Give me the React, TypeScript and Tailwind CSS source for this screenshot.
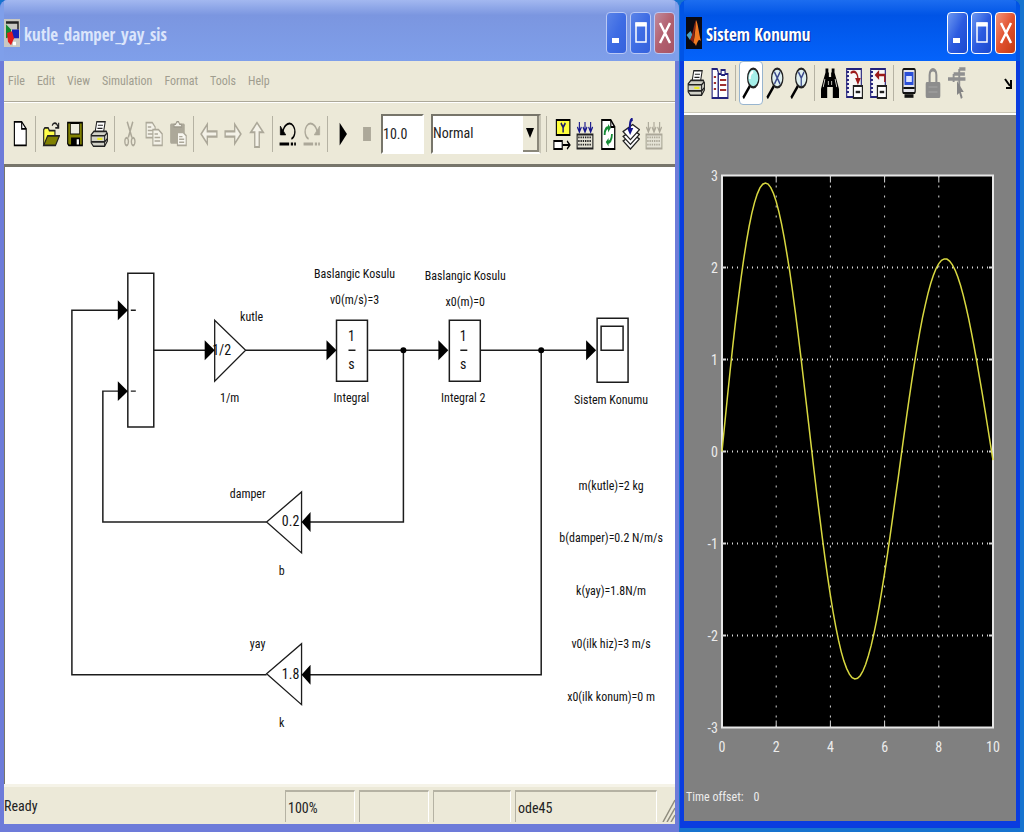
import type { ReactNode } from "react";
import clsx from "clsx";

/* ---------- icons, drawn on a 16 x 16 pixel grid ---------- */

function Glyph({ children, className }: { children: ReactNode; className?: string }) {
  return (
    <svg
      viewBox="0 0 16 16"
      preserveAspectRatio="none"
      className={clsx("shrink-0", className ?? "w-[18px] h-7")}
      fill="none"
      aria-hidden="true"
    >
      {children}
    </svg>
  );
}

const NewIcon = () => (
  <Glyph>
    <path d="M3 1h6.5L13.5 5v9.5H3z" fill="#fff" stroke="#000" />
    <path d="M9.5 1v4h4" stroke="#000" />
  </Glyph>
);

const OpenIcon = () => (
  <Glyph>
    <path d="M1.5 14.5v-9l1-1h3l1 1.5h5v3" fill="#ffff4a" stroke="#222" />
    <path d="M1.5 14.5l3.5-5.5h10.5l-3.5 5.5z" fill="#808000" stroke="#222" />
    <path d="M9 3.2c1-2 4-2 5.2.6M14.8 1.5v3h-3" stroke="#222" />
  </Glyph>
);

const SaveIcon = () => (
  <Glyph>
    <path d="M1.5 1.5h13v13h-12l-1-1z" fill="#808000" stroke="#000" />
    <path d="M4 2h8v6H4z" fill="#ecebe0" stroke="#000" strokeWidth=".6" />
    <path d="M4.5 10h8v4.5h-8z" fill="#000" />
    <path d="M9.5 11h2v3h-2z" fill="#fff" />
  </Glyph>
);

function PrintIcon({ className }: { className?: string }) {
  return (
    <Glyph className={className}>
      <path d="M4.5 7L6 1h7.5L12 7z" fill="#fff" stroke="#222" strokeWidth=".9" />
      <path d="M7 3h4.5M6.6 4.8h4.5" stroke="#222" strokeWidth=".7" />
      <path d="M1 8.5l2.5-2h11l1 1.5v4L13 15H3l-2-2z" fill="#d2d2c8" stroke="#222" strokeWidth=".9" />
      <path d="M1 9h12M13 9l2.3-1.7M1 12.5h12l2.3-1.7M13 9v6" stroke="#222" strokeWidth=".9" />
      <path d="M6.5 10.8h4.5" stroke="#e9e92a" strokeWidth="1.3" />
    </Glyph>
  );
}

const CutIcon = () => (
  <Glyph>
    <path d="M5.5 1L9.7 10M10.5 1L6.5 10" stroke="#aca899" strokeWidth="1.3" />
    <ellipse cx="5" cy="12.3" rx="1.6" ry="2.2" stroke="#aca899" strokeWidth="1.2" />
    <ellipse cx="10.8" cy="12.3" rx="1.6" ry="2.2" stroke="#aca899" strokeWidth="1.2" />
  </Glyph>
);

const CopyIcon = () => (
  <Glyph>
    <path d="M1 1.5h5.5L9 4v6H1z" fill="#f4f2e8" stroke="#aca899" />
    <path d="M2.5 4h3M2.5 6h5M2.5 8h5" stroke="#aca899" strokeWidth=".8" />
    <path d="M7 5.5h5L15.3 8v6.5H7z" fill="#f4f2e8" stroke="#aca899" />
    <path d="M8.5 8h3M8.5 10h5M8.5 12h5" stroke="#aca899" strokeWidth=".8" />
  </Glyph>
);

const PasteIcon = () => (
  <Glyph>
    <rect x="1" y="2" width="13" height="11.5" rx="1" fill="#aca899" />
    <path d="M4.5 4V2.5h1.3L7 1h1.5l1 1.5H11V4z" fill="#f4f2e8" stroke="#9d998b" strokeWidth=".8" />
    <path d="M7.5 7h5l2.8 2v5.5H7.5z" fill="#f8f7f0" stroke="#aca899" />
    <path d="M9 9.5h3M9 11h4.5M9 12.7h4.5" stroke="#aca899" strokeWidth=".8" />
  </Glyph>
);

const BackIcon = () => (
  <Glyph>
    <path d="M1 8l5.5-5.5v4H15v3H6.500v4z" fill="#f4f2e8" stroke="#aca899" strokeWidth="1.2" />
  </Glyph>
);

const ForwardIcon = () => (
  <Glyph>
    <path d="M15 8L9.500 2.500v4H1v3h8.500v4z" fill="#f4f2e8" stroke="#aca899" strokeWidth="1.2" />
  </Glyph>
);

const UpIcon = () => (
  <Glyph>
    <path d="M8 1.500L13.500 7H10v8.500H6V7H2.500z" fill="#f4f2e8" stroke="#aca899" strokeWidth="1.2" />
  </Glyph>
);

function TurnIcon({ redo }: { redo?: boolean }) {
  const ink = redo ? "#aca899" : "#000";
  return (
    <Glyph>
      <g transform={redo ? "matrix(-1 0 0 1 16 0)" : undefined} stroke={ink}>
        <path d="M3.5 6.5C5 2 10 .8 12.8 3.5c2.5 2.5 1.2 6.500-1.8 7.300" strokeWidth="1.1" />
        <path d="M1.2 3.5v5H6z" fill={ink} strokeWidth=".5" />
      </g>
      <path d="M.5 13.700h8.500M10.500 13.700h2M13.500 13.700h1.500" stroke={ink} strokeWidth="1.8" />
    </Glyph>
  );
}

const PlayIcon = () => (
  <Glyph>
    <path d="M5 1.5L11.5 8 5 14.5z" fill="#000" />
  </Glyph>
);

const StopIcon = () => (
  <Glyph>
    <path d="M4.5 4h7v8h-7z" fill="#aca899" />
  </Glyph>
);

const LibraryIcon = () => (
  <Glyph className="w-[18px] h-8">
    <path d="M3 1h12v7.5H3z" fill="#ffff3c" stroke="#000" />
    <path d="M7 2.5l2 2.2 2-2.2M9 4.5v2.7" stroke="#1b1b6e" strokeWidth="1.3" />
    <path d="M.8 11.5h7.4v4H.8z" fill="#fff" stroke="#000" />
    <path d="M8.5 13.5H15M12.5 11.5l2.5 2-2.5 2" stroke="#000" />
  </Glyph>
);

function BuildIcon({ off }: { off?: boolean }) {
  const arrows = off ? "#aca899" : "#16168c";
  const ink = off ? "#aca899" : "#222";
  return (
    <Glyph className="w-[18px] h-8">
      <path
        d="M3 2v4.500M8 2v4.500M13 2v4.500M1.200 4.500L3 7l1.800-2.500M6.200 4.500L8 7l1.800-2.500M11.200 4.500L13 7l1.800-2.500"
        stroke={arrows}
      />
      <path d="M1 8.200v7h14v-7z" fill="#e5e3d6" stroke={ink} />
      <path d="M2 9.700h12M2 11.500h12M2 13.300h12" stroke={ink} strokeWidth=".9" strokeDasharray="1.2 .8" />
    </Glyph>
  );
}

const RefreshIcon = () => (
  <Glyph className="w-[18px] h-8">
    <path d="M2.5 1h8L14 4.500v11H2.500z" fill="#fff" stroke="#000" strokeWidth="1.1" />
    <path d="M10.5 1v3.500H14" stroke="#000" />
    <path d="M5 8.500c0-3 2-4 4-3.500M11.500 8c0 3-2 4.500-4 4" stroke="#168c36" strokeWidth="1.6" />
    <path d="M8 3l2.500 2L8 7.200zM8.500 10L6 12l2.500 2.200z" fill="#168c36" />
  </Glyph>
);

const LayersIcon = () => (
  <Glyph className="w-[18px] h-8">
    <path d="M1 11.500L9.500 8l6 2.500-8 5z" fill="#fff" stroke="#222" strokeWidth=".8" />
    <path d="M1 9.200l8.500-3.500 6 2.500-8 5z" fill="#fff" stroke="#222" strokeWidth=".8" />
    <path d="M1 6.800l8.500-3.500 6 2.500-8 5z" fill="#fff" stroke="#222" strokeWidth=".8" />
    <path d="M9.500.5C7 1 7 3 7 5.500" stroke="#16168c" strokeWidth="1.8" />
    <path d="M4.500 5h5.500L7.200 8.500z" fill="#16168c" />
  </Glyph>
);

const ParametersIcon = () => (
  <Glyph className="w-[18px] h-8">
    <path d="M1 1h4.500l1 1.800V15.500H1z" fill="#fff" stroke="#22227c" />
    <path d="M6.500 3.500H9V1.500h3.500v2H15v12H6.500z" fill="#fff" stroke="#22227c" />
    <path d="M2.500 5h2M2.500 8h2M2.500 11h2M8 6.500h5.500M8 9h5.500M8 11.500h5.500" stroke="#a03030" strokeWidth=".9" />
    <path d="M9 4h3.500" stroke="#22227c" />
  </Glyph>
);

function LensIcon({ axis }: { axis?: "x" | "y" }) {
  return (
    <Glyph className="w-[18px] h-8">
      <path d="M7 9.500L1 15.500" stroke="#000" strokeWidth="1.8" />
      <ellipse
        cx="10"
        cy="5.500"
        rx="5"
        ry="4.700"
        fill={axis ? "#dff0f0" : "#a5efe9"}
        stroke="#222"
        strokeWidth="1.100"
      />
      {!axis && <path d="M7 6c0-3 2-3.500 3-3.500" stroke="#fff" strokeWidth="1.500" />}
      {axis === "x" && <path d="M7.500 2.500l5 6M12.500 2.500l-5 6" stroke="#3b4a8c" strokeWidth="1.100" />}
      {axis === "y" && <path d="M7.500 2.500L10 5.500l2.500-3M10 5.500v4" stroke="#3b4a8c" strokeWidth="1.100" />}
    </Glyph>
  );
}

const BinocularsIcon = () => (
  <Glyph className="w-[18px] h-8">
    <path
      d="M4 .8h2.500v2H7V5h2V2.800h.5v-2H12v2l1.500 3L16 11v4.500h-5.500V10h-5v5.500H0V11l2.500-5.200L4 2.800z"
      fill="#000"
    />
    <path d="M3.500 6L2 10M12.500 6l1.500 4M6.500 7v2M9.500 7v2" stroke="#ecebe0" strokeWidth=".7" />
  </Glyph>
);

function AxesIcon({ restore }: { restore?: boolean }) {
  return (
    <Glyph className="w-[18px] h-8">
      <path d="M1.500 1h13v14h-13z" fill="#f7f7f7" stroke="#22227c" />
      <path d="M2.500 2v12" stroke="#22227c" strokeWidth="2" strokeDasharray="1 1" />
      {restore ? (
        <>
          <path d="M9 1.500L5 4l4 2.500z" fill="#9c1a1a" />
          <path d="M14.500 4H8M14 4v3.500" stroke="#9c1a1a" strokeWidth="1.200" />
        </>
      ) : (
        <>
          <path d="M5 3c4-1.500 6.500 0 6.500 3.500" stroke="#9c1a1a" strokeWidth="1.200" />
          <path d="M9 5.500h5L11.500 9z" fill="#9c1a1a" />
        </>
      )}
      <path d="M7.500 9.500h8v6h-8z" fill="#fff" stroke="#222" strokeWidth="1.100" />
      <path d="M9.500 12.500h4" stroke="#222" strokeWidth="1.200" />
    </Glyph>
  );
}

const FloatingIcon = () => (
  <Glyph className="w-[18px] h-8">
    <rect x="2.500" y="1" width="11" height="12" rx="1" fill="#e3e3ea" stroke="#111" strokeWidth="1.100" />
    <path d="M4 2.500h8v6.500H4z" fill="#2a4fd8" />
    <path d="M5.500 4.500h5v3h-5z" fill="#dfe6ff" />
    <path d="M3 10.500h10" stroke="#111" />
    <path d="M4 14.500h8" stroke="#111" strokeWidth="1.800" />
  </Glyph>
);

const LockIcon = () => (
  <Glyph className="w-[18px] h-8">
    <path d="M5 8V4c0-3.500 6-3.500 6 0v4" stroke="#8d8d8d" strokeWidth="1.800" />
    <rect x="1.500" y="7.500" width="13" height="8" rx="1" fill="#8d8d8d" />
    <path d="M4 10h8M4 12.500h8" stroke="#a5a5a5" strokeWidth=".6" />
  </Glyph>
);

const SignalIcon = () => (
  <Glyph className="w-[18px] h-8">
    <path d="M0 6h15.500M5 3.500h10M5 3.500v4M10 1h5.500M10 1v9" stroke="#909090" strokeWidth="1.700" />
    <path d="M8 7v7l2-1 1.500 3 1.500-.8-1.500-2.700H14z" fill="#858585" />
  </Glyph>
);

const SimulinkMark = () => (
  <Glyph className="w-4 h-7">
    <path d="M0 0h16v16H0z" fill="#c9c8c2" />
    <path d="M2 2h12v4" stroke="#222" strokeWidth="1.500" />
    <path d="M2 3l5 3v4l-5 1z" fill="#118a2e" />
    <path d="M8 6h7v5H8z" fill="#1522b8" />
    <path d="M3 8l5-1 2 4-3 4-3-2z" fill="#df1c1c" />
    <path d="M9 14h3" stroke="#fff" strokeWidth="2" />
  </Glyph>
);

const MatlabMark = () => (
  <Glyph className="w-4 h-8">
    <path d="M0 0h16v16H0z" fill="#0a0a14" />
    <path d="M.5 9l4-2 2 2-2.500 2.500z" fill="#4b9fc0" />
    <path d="M4 11.500C7 9 8 3 10 1.500L7.500 13c-1-.5-2-1.500-3.500-1.500z" fill="#8d2413" />
    <path d="M10 1.500c2 1.500 3 7 5 10.500-2-1-3-.5-5 2.500-.8-1-1.500-1.500-2.500-1.500C9 9 9.500 5 10 1.500z" fill="#f17a22" />
  </Glyph>
);

/* ---------- window parts ---------- */

function Caption({ kind, active }: { kind: "Minimize" | "Maximize" | "Close"; active?: boolean }) {
  return (
    <button
      aria-label={kind}
      className={clsx(
        "flex h-[42px] w-[21px] items-center justify-center rounded border",
        active ? "border-white" : "border-[#b9c8f5]",
        kind === "Close" &&
          (active
            ? "bg-linear-to-br from-[#f0937a] via-[#e2512d] to-[#c23a14]"
            : "bg-linear-to-br from-[#c08a9c] via-[#b2606f] to-[#a65365]"),
        kind !== "Close" &&
          (active
            ? "bg-linear-to-br from-[#6e97f0] via-[#2c5be0] to-[#1a49cf]"
            : "bg-linear-to-br from-[#5a83e8] via-[#3e6ce4] to-[#3561dc]"),
      )}
    >
      <svg viewBox="0 0 14 28" className="h-7 w-3.5" fill="none" stroke="#fff" aria-hidden="true">
        {kind === "Minimize" && <path d="M2 21.500h7" strokeWidth="5" />}
        {kind === "Maximize" && (
          <>
            <path d="M2 4h10v19H2z" strokeWidth="1.500" />
            <path d="M1.500 5.500h11" strokeWidth="4" />
          </>
        )}
        {kind === "Close" && <path d="M2 4l10 20M12 4L2 24" strokeWidth="2.500" />}
      </svg>
    </button>
  );
}

function TitleBar({ title, mark, active }: { title: string; mark: ReactNode; active?: boolean }) {
  return (
    <header
      className={clsx(
        "flex h-[61px] items-center gap-1 pt-1",
        active
          ? "bg-linear-to-b from-[#1c6df0] via-[#0054e6] via-25% to-[#0563fb] pl-0.5"
          : "bg-linear-to-b from-[#a3b8f0] via-[#7b96e0] via-25% to-[#7f9fea]",
      )}
    >
      {mark}
      <h1
        className={clsx(
          "flex-1 truncate pt-1 font-['Open_Sans_Condensed','Roboto_Condensed',sans-serif] text-[17px] leading-6 font-bold",
          active ? "text-white [text-shadow:1px_1px_#0a2a8c]" : "text-[#dbe5fb]",
        )}
      >
        {title}
      </h1>
      <div className="flex gap-[3px]">
        <Caption kind="Minimize" active={active} />
        <Caption kind="Maximize" active={active} />
        <Caption kind="Close" active={active} />
      </div>
    </header>
  );
}

interface ToolProps {
  label: string;
  narrow?: boolean;
  pressed?: boolean;
  children: ReactNode;
}

function Tool({ label, narrow, pressed, children }: ToolProps) {
  return (
    <button
      aria-label={label}
      className={clsx(
        "flex h-11 shrink-0 items-center justify-center",
        narrow ? "w-[23px]" : "w-6",
        pressed && "rounded border border-[#98b5cf] bg-white",
      )}
    >
      {children}
    </button>
  );
}

const Divider = () => <span className="mx-[3px] h-9 w-px shrink-0 bg-[#b5b2a3]" />;

function StatusCell({ className, children }: { className: string; children?: ReactNode }) {
  return (
    <span
      className={clsx(
        "h-8 border-t-2 border-r border-l border-t-[#b5b2a3] border-r-white border-l-[#b5b2a3] pl-0.5",
        className,
      )}
    >
      {children}
    </span>
  );
}

/* ---------- block diagram ---------- */

const wires = [
  "M154 350H206",
  "M246 350H328",
  "M369 350H440",
  "M481 350H588",
  "M404 350V522H310",
  "M542 350V675H310",
  "M267 522H103V391H119",
  "M267 675H72V310H119",
];

const inputs = [
  [128, 310],
  [128, 391],
  [215, 350],
  [337, 350],
  [449, 350],
  [597, 350],
];

const labels: [number, number, string][] = [
  [252, 321, "kutle"],
  [230, 402, "1/m"],
  [355, 278, "Baslangic Kosulu"],
  [355, 304, "v0(m/s)=3"],
  [466, 280, "Baslangic Kosulu"],
  [466, 306, "x0(m)=0"],
  [352, 402, "Integral"],
  [464, 402, "Integral 2"],
  [612, 404, "Sistem Konumu"],
  [248, 498, "damper"],
  [282, 575, "b"],
  [258, 648, "yay"],
  [282, 727, "k"],
  [612, 490, "m(kutle)=2 kg"],
  [612, 542, "b(damper)=0.2 N/m/s"],
  [612, 595, "k(yay)=1.8N/m"],
  [612, 648, "v0(ilk hiz)=3 m/s"],
  [612, 701, "x0(ilk konum)=0 m"],
];

const values: [number, number, string][] = [
  [222, 355, "1/2"],
  [291, 526, "0.2"],
  [291, 679, "1.8"],
  [352, 341, "1"],
  [352, 369, "s"],
  [464, 341, "1"],
  [464, 369, "s"],
];

function Diagram() {
  return (
    <svg viewBox="5 167 671 617" className="h-full w-full" fill="none" role="img" aria-label="Block diagram">
      <g stroke="#1c1c1c" strokeWidth="1.500">
        {wires.map((d) => (
          <path key={d} d={d} />
        ))}
        <path d="M128 273h26v154h-26zM337 320h31v61h-31zM450 320h31v61h-31z" />
        <path d="M598 318h31v64h-31zM602 326h22v24h-22z" />
        <path d="M215 320v61l31-31zM302 492v61l-35-31zM302 644v61l-35-31z" strokeWidth="1.300" />
        <path d="M131 310h5M131 391h5M349 350h7M461 350h7" />
      </g>
      <g fill="#000">
        {inputs.map(([x, y]) => (
          <path key={`${x}-${y}`} d={`M${x} ${y}l-10-10v20z`} />
        ))}
        <path d="M302 522l9-10v20zM302 675l9-10v20z" />
        <circle cx="404" cy="350" r="3" />
        <circle cx="542" cy="350" r="3" />
      </g>
      <g fill="#111" textAnchor="middle">
        {labels.map(([x, y, text]) => (
          <text key={`${x}-${y}`} x={x} y={y} className="text-[12px]">
            {text}
          </text>
        ))}
        {values.map(([x, y, text]) => (
          <text key={`${x}-${y}`} x={x} y={y} className="text-[14px]">
            {text}
          </text>
        ))}
      </g>
    </svg>
  );
}

/* ---------- scope ---------- */

const plot = { left: 38, top: 60, width: 271, height: 552 };
const px = (t: number) => plot.left + (t / 10) * plot.width;
const py = (v: number) => plot.top + ((3 - v) / 6) * plot.height;

// free response of m=2, b=0.2, k=1.8 with x(0)=0 and v(0)=3
const omega = Math.sqrt(0.9 - 0.05 ** 2);
const curve = Array.from({ length: 101 }, (_, i) => {
  const t = i / 10;
  const x = (3 / omega) * Math.exp(-0.05 * t) * Math.sin(omega * t);
  return `${px(t).toFixed(1)},${py(x).toFixed(1)}`;
}).join(" ");

function Scope() {
  return (
    <svg viewBox="0 0 332 669" className="h-full w-full" fill="none" role="img" aria-label="Sistem Konumu scope">
      <rect
        x={plot.left}
        y={plot.top}
        width={plot.width}
        height={plot.height}
        fill="#000"
        stroke="#e6e6e6"
        strokeWidth="2"
      />
      {[2, 4, 6, 8].map((t) => (
        <g key={t} stroke="#d8d8d8">
          <path d={`M${px(t)} ${plot.top}v${plot.height}`} strokeDasharray="2 8" />
          <path d={`M${px(t)} ${plot.top}v7M${px(t)} ${plot.top + plot.height}v-7`} />
        </g>
      ))}
      {[2, 1, 0, -1, -2].map((v) => (
        <g key={v} stroke="#d8d8d8" strokeWidth="2">
          <path d={`M${plot.left} ${py(v)}h${plot.width}`} strokeDasharray="1 4" />
          <path d={`M${plot.left} ${py(v)}h4M${plot.left + plot.width} ${py(v)}h-4`} />
        </g>
      ))}
      <polyline points={curve} stroke="#d8d840" strokeWidth="1.500" />
      <g fill="#ececec" className="text-[14px]">
        {[3, 2, 1, 0, -1, -2, -3].map((v) => (
          <text key={v} x="34" y={py(v) + 5} textAnchor="end">
            {v}
          </text>
        ))}
        {[0, 2, 4, 6, 8, 10].map((t) => (
          <text key={t} x={px(t)} y="636" textAnchor="middle">
            {t}
          </text>
        ))}
      </g>
    </svg>
  );
}

/* ---------- page ---------- */

const menus = ["File", "Edit", "View", "Simulation", "Format", "Tools", "Help"];

export default function App() {
  return (
    <div className="flex h-screen bg-[#1673cf] font-['Roboto_Condensed','Roboto',sans-serif] text-[12px] text-[#222]">
      {/* model window */}
      <section className="flex min-w-0 flex-1 flex-col rounded-t-lg border-r-4 border-b-8 border-l-4 border-[#6d7bd9] bg-[#ece9d8]">
        <div className="-mx-1 overflow-hidden rounded-t-lg bg-[#7f9fea] px-1">
          <TitleBar title="kutle_damper_yay_sis" mark={<SimulinkMark />} />
        </div>
        <nav className="flex h-[41px] items-center gap-3 border-b border-[#aca899] pl-1 text-[#a09d8f]">
          {menus.map((m) => (
            <button key={m}>{m}</button>
          ))}
        </nav>
        <div className="flex h-[62px] items-center border-t border-white pl-1">
          <Tool label="New"><NewIcon /></Tool>
          <Divider />
          <Tool label="Open"><OpenIcon /></Tool>
          <Tool label="Save"><SaveIcon /></Tool>
          <Tool label="Print"><PrintIcon /></Tool>
          <Divider />
          <Tool label="Cut"><CutIcon /></Tool>
          <Tool label="Copy"><CopyIcon /></Tool>
          <Tool label="Paste"><PasteIcon /></Tool>
          <Divider />
          <Tool label="Back"><BackIcon /></Tool>
          <Tool label="Forward"><ForwardIcon /></Tool>
          <Tool label="Up"><UpIcon /></Tool>
          <Divider />
          <Tool label="Undo"><TurnIcon /></Tool>
          <Tool label="Redo"><TurnIcon redo /></Tool>
          <Divider />
          <Tool label="Start simulation"><PlayIcon /></Tool>
          <Tool label="Stop simulation"><StopIcon /></Tool>
          <input
            aria-label="Stop time"
            defaultValue="10.0"
            className="ml-0.5 h-10 w-[43px] border-2 border-t-[#77756a] border-r-white border-b-white border-l-[#77756a] bg-white text-[14px]"
          />
          <div className="relative mr-0.5 ml-[7px] h-10 w-[110px]">
            <select
              aria-label="Simulation mode"
              className="h-full w-full appearance-none border-2 border-t-[#77756a] border-r-[#c9c6b6] border-b-white border-l-[#77756a] bg-white text-[14px]"
            >
              <option>Normal</option>
            </select>
            <span className="pointer-events-none absolute top-0.5 right-0.5 bottom-0.5 flex w-4 items-center justify-center border-r-2 border-b-2 border-[#8a877a] bg-[#ece9d8]">
              <svg viewBox="0 0 8 10" className="h-2.5 w-2" aria-hidden="true">
                <path d="M0 0h8L4 10z" />
              </svg>
            </span>
          </div>
          <Divider />
          <Tool label="Library browser" narrow><LibraryIcon /></Tool>
          <Tool label="Build" narrow><BuildIcon /></Tool>
          <Tool label="Refresh" narrow><RefreshIcon /></Tool>
          <Tool label="Update diagram" narrow><LayersIcon /></Tool>
          <Tool label="Build subsystem" narrow><BuildIcon off /></Tool>
        </div>
        <main className="min-h-0 flex-1 border-t-3 border-l border-[#77756a] bg-white">
          <Diagram />
        </main>
        <footer className="flex h-10 shrink-0 items-end gap-1 border-t-3 border-[#f5f3e8] pb-0.5 text-[14px] leading-8">
          <span className="flex-1">Ready</span>
          <StatusCell className="w-[70px]">100%</StatusCell>
          <StatusCell className="w-[70px]" />
          <StatusCell className="w-[78px]" />
          <StatusCell className="w-[142px]">ode45</StatusCell>
          <svg viewBox="0 0 14 24" className="h-6 w-3.5" stroke="#8f8c7e" strokeWidth="1.500" aria-hidden="true">
            <path d="M2 24L14 2M6 24l8-14M10 24l4-7" />
          </svg>
        </footer>
      </section>

      {/* scope window */}
      <section className="mr-1 mb-1 ml-px flex w-[340px] flex-col rounded-t-lg border-r-4 border-b-[7px] border-l-4 border-[#0a3ce0] bg-[#ece9d8]">
        <div className="-mx-1 overflow-hidden rounded-t-lg bg-[#0054e6] px-1">
          <TitleBar title="Sistem Konumu" mark={<MatlabMark />} active />
        </div>
        <div className="flex h-[52px] items-center border-b border-[#c9c6b6] pb-2">
          <Tool label="Print"><PrintIcon /></Tool>
          <Tool label="Parameters"><ParametersIcon /></Tool>
          <Divider />
          <Tool label="Zoom" pressed><LensIcon /></Tool>
          <Tool label="Zoom X-axis"><LensIcon axis="x" /></Tool>
          <Tool label="Zoom Y-axis"><LensIcon axis="y" /></Tool>
          <Divider />
          <Tool label="Autoscale"><BinocularsIcon /></Tool>
          <Tool label="Save axes settings"><AxesIcon /></Tool>
          <Tool label="Restore axes settings"><AxesIcon restore /></Tool>
          <Divider />
          <Tool label="Floating scope"><FloatingIcon /></Tool>
          <Tool label="Lock axes"><LockIcon /></Tool>
          <Tool label="Signal selection"><SignalIcon /></Tool>
          <button aria-label="Dock" className="mr-1 ml-auto">
            <svg viewBox="0 0 8 12" className="h-3 w-2" fill="none" stroke="#000" strokeWidth="2" aria-hidden="true">
              <path d="M1 2l5 7M7 3v8H2" />
            </svg>
          </button>
        </div>
        <div className="min-h-0 flex-1 border-t-2 border-white bg-[#808080]">
          <Scope />
        </div>
        <p className="flex gap-2.5 bg-[#808080] pb-3 pl-0.5 leading-6 text-[#ececec]">
          <span>Time offset:</span>
          <span>0</span>
        </p>
      </section>
    </div>
  );
}
